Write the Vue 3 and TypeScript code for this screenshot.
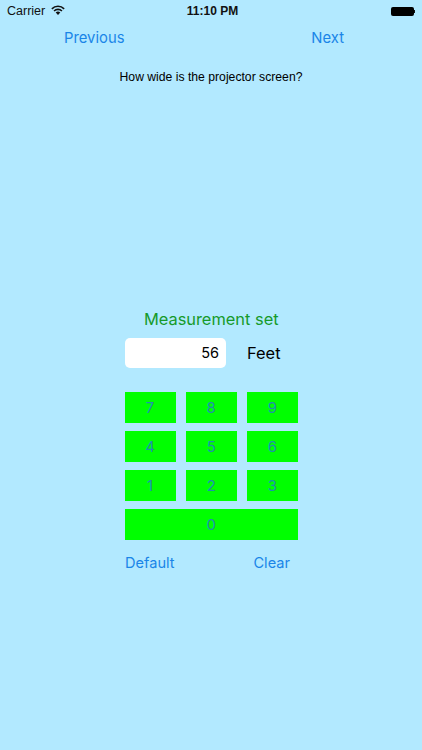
<script setup lang="ts">
const rows: string[][] = [['7', '8', '9'], ['4', '5', '6'], ['1', '2', '3']]
</script>

<template>
  <div class="screen">
    <div class="status">
      <div class="status-left">
        <span>Carrier</span>
        <svg class="wifi" width="14" height="10" viewBox="0 0 14 10">
          <path d="M0.3 3.2A9.6 9.6 0 0 1 13.7 3.2L12.6 4.4A8 8 0 0 0 1.4 4.4Z" fill="#111" />
          <path d="M2.5 5.4A6.4 6.4 0 0 1 11.5 5.4L10.4 6.6A4.8 4.8 0 0 0 3.6 6.6Z" fill="#111" />
          <path d="M4.7 7.6A3.2 3.2 0 0 1 9.3 7.6L7 10Z" fill="#111" />
        </svg>
      </div>
      <div class="status-time">11:10 PM</div>
      <div class="status-right">
        <div class="battery"></div>
        <div class="battery-tip"></div>
      </div>
    </div>

    <div class="nav">
      <span class="link">Previous</span>
      <span class="link">Next</span>
    </div>

    <p class="question">How wide is the projector screen?</p>

    <div class="panel">
      <div class="set">Measurement set</div>
      <div class="entry">
        <div class="field">56</div>
        <div class="unit">Feet</div>
      </div>
      <div class="pad">
        <template v-for="row in rows" :key="row[0]">
          <div v-for="k in row" :key="k" class="key">{{ k }}</div>
        </template>
        <div class="key wide">0</div>
      </div>
      <div class="actions">
        <span class="link small">Default</span>
        <span class="link small">Clear</span>
      </div>
    </div>
  </div>
</template>

<style>
html, body { margin: 0; background: #b2e9ff; }
</style>

<style scoped>
.screen {
  width: 422px;
  height: 750px;
  background: #b2e9ff;
  font-family: "Liberation Sans", Arial, sans-serif;
  color: #000;
  overflow: hidden;
  display: flex;
  flex-direction: column;
}
.status {
  height: 22px;
  padding: 0 7px;
  display: grid;
  grid-template-columns: 1fr auto 1fr;
  align-items: center;
  font-size: 12.5px;
  color: #111;
}
.status-left { display: flex; align-items: center; gap: 6px; }
.wifi { margin-top: -2px; }
.status-time { font-weight: 700; font-size: 12px; padding-left: 3px; }
.status-right { display: flex; justify-content: flex-end; align-items: center; }
.battery { width: 23px; height: 9px; background: #000; border-radius: 2px; }
.battery-tip { width: 1.5px; height: 3px; background: #111; }
.nav {
  height: 31px;
  padding: 1px 78px 0 64px;
  box-sizing: border-box;
  display: flex;
  justify-content: space-between;
  align-items: center;
}
.link {
  font-family: Inter, "Liberation Sans", sans-serif;
  font-size: 14.8px;
  color: #1a85e8;
}
.question {
  margin: 0;
  padding-top: 17px;
  text-align: center;
  font-size: 12.2px;
  line-height: 15px;
  color: #000;
}
.panel {
  margin-top: 224px;
  margin-left: 124.5px;
  width: 173.5px;
  display: flex;
  flex-direction: column;
}
.set {
  font-family: Inter, "Liberation Sans", sans-serif;
  text-align: center;
  font-size: 16.4px;
  line-height: 20px;
  color: #169a2a;
}
.entry {
  margin-top: 9px;
  display: flex;
  align-items: center;
}
.field {
  box-sizing: border-box;
  width: 101.5px;
  height: 30px;
  padding-right: 7px;
  background: #fff;
  border-radius: 5px;
  text-align: right;
  font-family: Inter, "Liberation Sans", sans-serif;
  font-size: 14.5px;
  line-height: 30px;
  color: #000;
}
.unit {
  margin-left: 21px;
  font-family: Inter, "Liberation Sans", sans-serif;
  font-size: 16.4px;
  line-height: 28px;
  color: #000;
}
.pad {
  margin-top: 24px;
  display: grid;
  grid-template-columns: repeat(3, 51px);
  grid-auto-rows: 30.5px;
  column-gap: 10.25px;
  row-gap: 8.5px;
}
.key {
  background: #00ff00;
  display: flex;
  align-items: center;
  justify-content: center;
  font-family: Inter, "Liberation Sans", sans-serif;
  font-size: 15px;
  color: #1f8fb0;
}
.wide { grid-column: 1 / -1; }
.actions {
  margin-top: 13.5px;
  padding: 0 8px 0 0.5px;
  display: flex;
  justify-content: space-between;
}
.small { font-size: 14.6px; line-height: 20px; }
</style>
